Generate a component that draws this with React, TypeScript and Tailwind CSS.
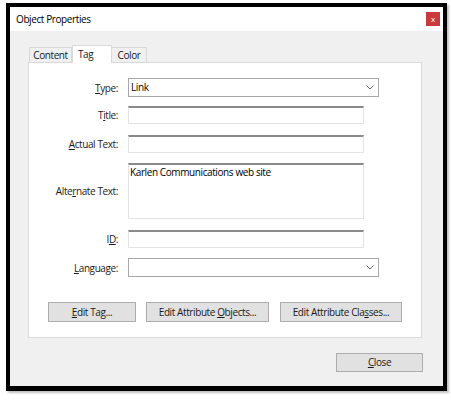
import React from "react";

const font = { fontFamily: '"Open Sans", "Noto Sans", sans-serif' };

function U({ children }: { children: React.ReactNode }) {
  return <span className="underline underline-offset-[1px]">{children}</span>;
}

function Label({ children }: { children: React.ReactNode }) {
  return (
    <div className="w-[90px] text-right pr-[1px] text-[10px] tracking-[-0.4px] text-[#1a1a1a] leading-none">
      <span>{children}</span>
    </div>
  );
}

function TextBox({ h = 18, children }: { h?: number; children?: React.ReactNode }) {
  return (
    <div
      className="w-[236px] bg-white border border-[#e3e3e3] border-t-2 border-t-[#8a8a8a] pl-[1px] pt-[1px] text-[10px] tracking-[-0.4px] leading-[12px] text-black"
      style={{ height: h }}
    >
      {children}
    </div>
  );
}

function Select({ value }: { value?: string }) {
  return (
    <div className="w-[251px] h-[19px] bg-white border border-[#a8a8a8] flex items-center justify-between pl-[2px] pr-[4px] text-[10px] tracking-[-0.4px] text-black">
      <span>{value}</span>
      <svg width="8" height="5" viewBox="0 0 8 5" fill="none" stroke="#6a6a6a" strokeWidth="1">
        <path d="M0.5 0.5 L4 4 L7.5 0.5" />
      </svg>
    </div>
  );
}

function Btn({ w, className = "", children }: { w: number; className?: string; children: React.ReactNode }) {
  return (
    <div
      className={"h-[20px] bg-[#e1e1e1] border border-[#adadad] flex items-center justify-center text-[10px] tracking-[-0.4px] text-[#1a1a1a] " + className}
      style={{ width: w }}
    >
      <span>{children}</span>
    </div>
  );
}

export default function App() {
  return (
    <div className="w-[451px] h-[400px] bg-white pt-[3px] pl-[6px]" style={font}>
      <div className="w-[441px] h-[388px] border-4 border-b-[5px] border-black flex flex-col shadow-[2px_2px_2px_rgba(0,0,0,0.25)]">
        <div className="h-[24px] bg-white flex items-center justify-between pl-[6px] pr-[3px]">
          <span className="text-[10px] tracking-[-0.4px] text-black">Object Properties</span>
          <div className="w-[14px] h-[14px] bg-[#c9393e] flex items-center justify-center text-white text-[8px] leading-none">x</div>
        </div>
        <div className="flex-1 bg-[#f0f0f0] flex flex-col pt-[14px] pl-[18px] pr-[21px]">
          <div className="flex items-end pl-[1px] h-[17px] relative z-10 text-[10px] tracking-[-0.4px] text-[#1a1a1a]">
            <div className="w-[43px] h-[15px] border border-b-0 border-[#d9d9d9] bg-[#f0f0f0] flex items-center justify-center">
              Content
            </div>
            <div className="w-[40px] h-[18px] bg-white border border-b-0 border-[#d9d9d9] -mb-[1px] flex items-start pt-[1px] pl-[5px]">
              Tag
            </div>
            <div className="w-[35px] h-[15px] border border-b-0 border-l-0 border-[#d9d9d9] bg-[#f0f0f0] flex items-center justify-center">
              Color
            </div>
          </div>
          <div className="w-[394px] h-[276px] bg-white border border-[#d9d9d9] flex flex-col pt-[15px]">
            <div className="flex items-center gap-[9px] h-[19px]">
              <Label><U>T</U>ype:</Label>
              <Select value="Link" />
            </div>
            <div className="flex items-center gap-[9px] mt-[9px]">
              <Label>T<U>i</U>tle:</Label>
              <TextBox />
            </div>
            <div className="flex items-center gap-[9px] mt-[11px]">
              <Label><U>A</U>ctual Text:</Label>
              <TextBox />
            </div>
            <div className="flex items-center gap-[9px] mt-[10px]">
              <Label>Alte<U>r</U>nate Text:</Label>
              <TextBox h={56}>Karlen Communications web site</TextBox>
            </div>
            <div className="flex items-center gap-[9px] mt-[11px]">
              <Label>I<U>D</U>:</Label>
              <TextBox />
            </div>
            <div className="flex items-center gap-[9px] mt-[10px] h-[19px]">
              <Label><U>L</U>anguage:</Label>
              <Select />
            </div>
            <div className="flex mt-[25px] pl-[19px]">
              <Btn w={88}><U>E</U>dit Tag...</Btn>
              <Btn w={123} className="ml-[10px]">Edit Attribute <U>O</U>bjects...</Btn>
              <Btn w={122} className="ml-[11px]">Edit Attribute Cla<U>s</U>ses...</Btn>
            </div>
          </div>
          <div className="flex justify-end mt-[15px] -mr-[1px]">
            <div className="w-[87px] h-[19px] bg-[#e1e1e1] border border-[#adadad] flex items-center justify-center text-[10px] tracking-[-0.4px] text-[#1a1a1a]">
              <span><U>C</U>lose</span>
            </div>
          </div>
        </div>
      </div>
    </div>
  );
}
